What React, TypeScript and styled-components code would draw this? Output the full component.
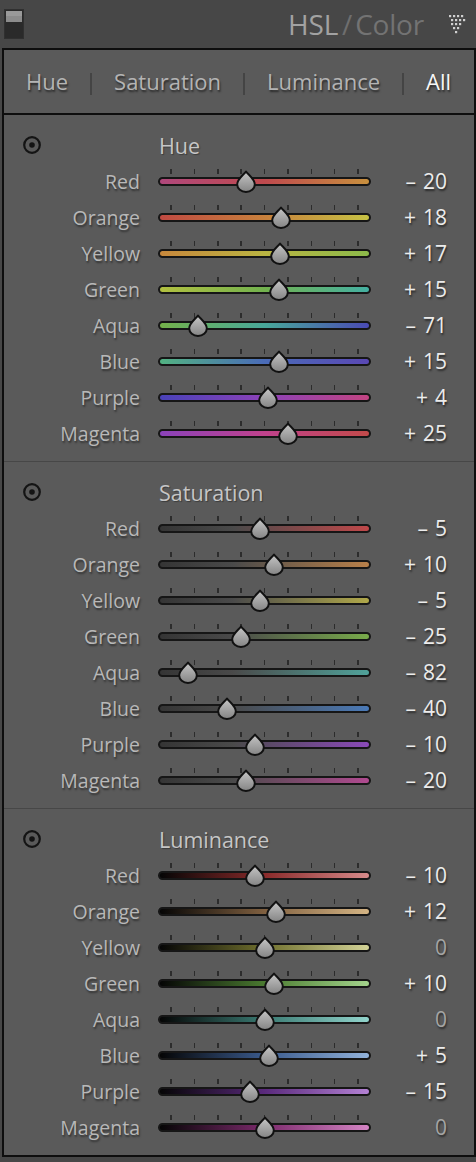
import styled, { createGlobalStyle } from 'styled-components';

const GlobalStyle = createGlobalStyle`
  html, body {
    margin: 0;
    padding: 0;
    background: #474747;
  }
  body {
    font-family: 'Open Sans', 'Noto Sans', sans-serif;
  }
`;

type Channel = { name: string; value: number; track: string };
type Group = { title: string; channels: Channel[] };

const NAMES = ['Red', 'Orange', 'Yellow', 'Green', 'Aqua', 'Blue', 'Purple', 'Magenta'];

const HUE_TRACKS = [
  'linear-gradient(90deg, #b0487c, #bf4a4e 50%, #c8903e)',
  'linear-gradient(90deg, #c04a42, #c8803c 50%, #c6c244)',
  'linear-gradient(90deg, #c8883c, #bab442 50%, #8cba4a)',
  'linear-gradient(90deg, #b2c040, #72b24e 50%, #44b0a2)',
  'linear-gradient(90deg, #74b24a, #48a89a 50%, #4a4ab4)',
  'linear-gradient(90deg, #52b282, #4a6cb8 50%, #5a48b4)',
  'linear-gradient(90deg, #4a42ba, #8c42b8 50%, #c24482)',
  'linear-gradient(90deg, #8a42ba, #c0428c 50%, #c24a4a)',
];

const SAT_COLORS = ['#c0484a', '#b8804a', '#b0a84a', '#78aa4a', '#50a29a', '#4a7ab8', '#8a4ab8', '#b04a90'];

const LUM_TRACKS = [
  ['#8a2a2a', '#d68a8a'],
  ['#806040', '#d4b484'],
  ['#70702e', '#d2d296'],
  ['#4a7a30', '#a4d48c'],
  ['#3a7a72', '#92d4cc'],
  ['#3a5a8c', '#92b2da'],
  ['#5a2a7c', '#b482d4'],
  ['#7c2a6c', '#d484c4'],
];

const build = (values: number[], track: (i: number) => string): Channel[] =>
  NAMES.map((name, i) => ({ name, value: values[i], track: track(i) }));

const GROUPS: Group[] = [
  {
    title: 'Hue',
    channels: build([-20, 18, 17, 15, -71, 15, 4, 25], (i) => HUE_TRACKS[i]),
  },
  {
    title: 'Saturation',
    channels: build(
      [-5, 10, -5, -25, -82, -40, -10, -20],
      (i) => `linear-gradient(90deg, #353535, #4a4a4a 35%, ${SAT_COLORS[i]})`,
    ),
  },
  {
    title: 'Luminance',
    channels: build(
      [-10, 12, 0, 10, 0, 5, -15, 0],
      (i) => `linear-gradient(90deg, #050505, ${LUM_TRACKS[i][0]} 50%, ${LUM_TRACKS[i][1]})`,
    ),
  },
];

const TABS = ['Hue', 'Saturation', 'Luminance', 'All'];

// slider geometry: 213px track, thumb travel inset 13px each side
const TRACK_W = 213;
const INSET = 13;
const thumbLeft = (v: number) => INSET + ((v + 100) / 200) * (TRACK_W - INSET * 2);

const ToggleIcon = () => (
  <svg width="20" height="30" viewBox="0 0 20 30">
    <rect x="0.5" y="0.5" width="19" height="29" fill="#2a2a2a" stroke="#303030" />
    <rect x="2" y="2" width="16" height="11" fill="#8c8c8c" />
    <rect x="2" y="2" width="16" height="5" fill="#9a9a9a" />
  </svg>
);

const DotTriangle = () => {
  const dots: JSX.Element[] = [];
  const rows = [4, 4, 3, 2, 1];
  rows.forEach((count, r) => {
    const offset = r === 1 ? 2 : (4 - count) * 2;
    for (let c = 0; c < count; c++) {
      dots.push(<rect key={`${r}-${c}`} x={offset + c * 4} y={r * 4} width="2.2" height="2.2" fill="#d0d0d0" />);
    }
  });
  return (
    <svg width="18" height="20" viewBox="-1 -1 18 20">
      {dots}
    </svg>
  );
};

const TargetIcon = () => (
  <svg width="20" height="20" viewBox="0 0 20 20">
    <circle cx="10" cy="10" r="7.8" fill="none" stroke="#141414" strokeWidth="2.2" />
    <circle cx="10" cy="10" r="2.8" fill="#141414" />
  </svg>
);

const Thumb = () => (
  <svg width="22" height="23" viewBox="0 0 22 23">
    <defs>
      <linearGradient id="thumbFill" x1="0" y1="0" x2="0" y2="1">
        <stop offset="0" stopColor="#c6c6c6" />
        <stop offset="1" stopColor="#848484" />
      </linearGradient>
    </defs>
    <path
      d="M11 1.5 C13.5 5 19.8 9 19.8 14.5 A8.8 7.5 0 0 1 2.2 14.5 C2.2 9 8.5 5 11 1.5 Z"
      fill="url(#thumbFill)"
      stroke="#111"
      strokeWidth="2"
      strokeLinejoin="round"
    />
  </svg>
);

const TICKS = [-100, -75, -50, -25, 0, 25, 50, 75, 100];

const Slider = ({ value, track }: { value: number; track: string }) => (
  <SliderBox>
    {TICKS.map((t) => (
      <Tick key={t} style={{ left: thumbLeft(t) }} />
    ))}
    <Track style={{ background: track }} />
    <ThumbHolder style={{ left: thumbLeft(value) }}>
      <Thumb />
    </ThumbHolder>
  </SliderBox>
);

const ValueText = ({ value }: { value: number }) => (
  <Value $muted={value === 0}>
    {value !== 0 && <Sign>{value < 0 ? '\u2013' : '+'}</Sign>}
    {Math.abs(value)}
  </Value>
);

const App = () => (
  <>
    <GlobalStyle />
    <Page>
      <Header>
        <ToggleIcon />
        <Title>
          HSL<Slash>/</Slash>
          <Dim>Color</Dim>
        </Title>
        <DotTriangle />
      </Header>
      <Panel>
        <Tabs>
          {TABS.map((tab, i) => (
            <TabItem key={tab}>
              {i > 0 && <Sep />}
              <Tab $active={tab === 'All'}>{tab}</Tab>
            </TabItem>
          ))}
        </Tabs>
        {GROUPS.map((group) => (
          <Section key={group.title}>
            <Row>
              <IconCell>
                <TargetIcon />
              </IconCell>
              <Heading>{group.title}</Heading>
            </Row>
            {group.channels.map((ch) => (
              <Row key={ch.name}>
                <Label>{ch.name}</Label>
                <Slider value={ch.value} track={ch.track} />
                <ValueText value={ch.value} />
              </Row>
            ))}
          </Section>
        ))}
      </Panel>
    </Page>
  </>
);

export default App;

const Page = styled.div`
  width: 476px;
  height: 1162px;
  background: #474747;
  overflow: hidden;
`;

const Header = styled.header`
  height: 48px;
  display: flex;
  align-items: center;
  padding: 0 10px 0 4px;
  box-sizing: border-box;
  gap: 8px;
`;

const Title = styled.div`
  margin-left: auto;
  margin-right: 16px;
  font-size: 28px;
  color: #a2a2a2;
  letter-spacing: -0.2px;
  white-space: pre;
`;

const Slash = styled.span`
  color: #6e6e6e;
  margin: 0 3px 0 4px;
`;

const Dim = styled.span`
  color: #737373;
`;

const Panel = styled.div`
  margin-left: 2px;
  width: 474px;
  box-sizing: border-box;
  border: 2px solid #0e0e0e;
  background: #5a5a5a;
`;

const Tabs = styled.nav`
  height: 65px;
  border-bottom: 2px solid #0e0e0e;
  display: flex;
  align-items: center;
  padding-left: 22px;
  padding-bottom: 2px;
  box-sizing: border-box;
`;

const TabItem = styled.div`
  display: flex;
  align-items: center;
`;

const Sep = styled.span`
  width: 2px;
  height: 22px;
  margin: 6px 22px 0;
  background: #444;
`;

const Tab = styled.span<{ $active?: boolean }>`
  font-size: 22px;
  color: ${(p) => (p.$active ? '#f6f6f6' : '#b4b4b4')};
  text-shadow: 1px 2px 2px rgba(0, 0, 0, 0.55);
`;

const Section = styled.section`
  padding: 12px 0 10px;
  & + & {
    border-top: 1px solid #474747;
  }
`;

const Row = styled.div`
  height: 36px;
  display: grid;
  grid-template-columns: 136px ${TRACK_W}px 58px;
  column-gap: 18px;
  align-items: center;
`;

const IconCell = styled.div`
  display: flex;
  padding-left: 18px;
`;

const Heading = styled.div`
  grid-column: 2 / 4;
  font-size: 21.5px;
  color: #c6c6c6;
  text-shadow: 1px 1px 1px rgba(0, 0, 0, 0.35);
  margin-left: 1px;
`;

const Label = styled.div`
  text-align: right;
  font-size: 19.5px;
  color: #b8b8b8;
  text-shadow: 1px 2px 2px rgba(0, 0, 0, 0.45);
`;

const Value = styled.div<{ $muted?: boolean }>`
  display: flex;
  justify-content: flex-end;
  align-items: baseline;
  font-size: 21px;
  color: ${(p) => (p.$muted ? '#a4a4a4' : '#ececec')};
  text-shadow: 1px 2px 2px rgba(0, 0, 0, 0.55);
  white-space: pre;
`;

const Sign = styled.span`
  margin-right: 7px;
`;

const SliderBox = styled.div`
  position: relative;
  height: 36px;
`;

const Tick = styled.span`
  position: absolute;
  top: 6px;
  width: 1.5px;
  height: 5px;
  margin-left: -0.75px;
  background: #2c2c2c;
`;

const Track = styled.div`
  position: absolute;
  left: 0;
  right: 0;
  top: 14px;
  height: 5px;
  border: 2px solid #161616;
  border-radius: 5px;
`;

const ThumbHolder = styled.div`
  position: absolute;
  top: 7px;
  width: 22px;
  height: 23px;
  margin-left: -11px;
  display: flex;
`;
